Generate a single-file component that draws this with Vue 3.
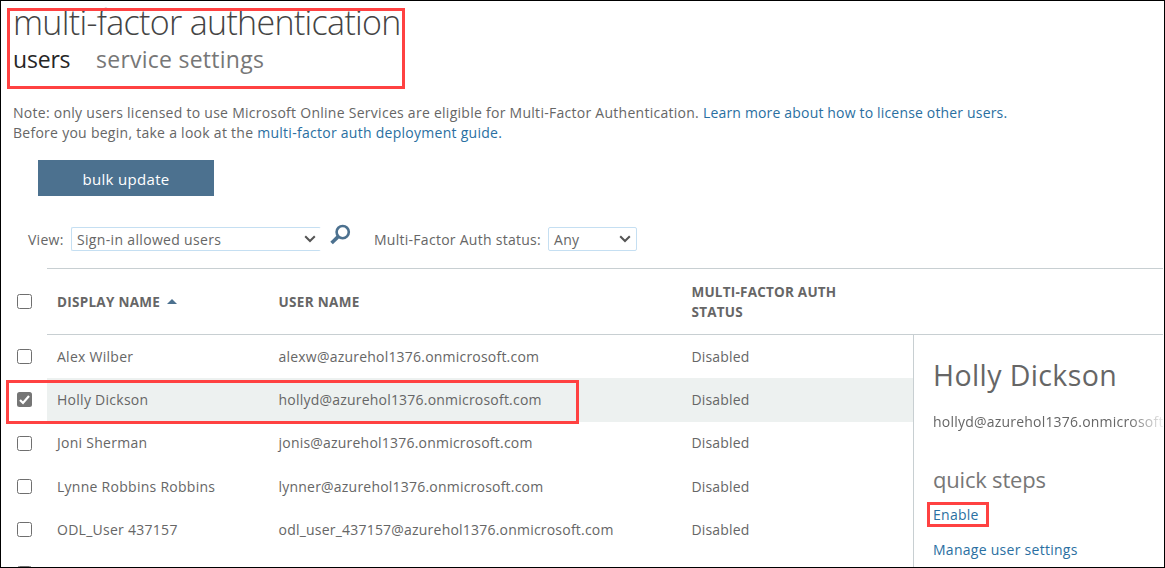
<script setup>
const users = [
  { name: 'Alex Wilber', email: 'alexw@azurehol1376.onmicrosoft.com' },
  { name: 'Holly Dickson', email: 'hollyd@azurehol1376.onmicrosoft.com', selected: true },
  { name: 'Joni Sherman', email: 'jonis@azurehol1376.onmicrosoft.com' },
  { name: 'Lynne Robbins Robbins', email: 'lynner@azurehol1376.onmicrosoft.com' },
  { name: 'ODL_User 437157', email: 'odl_user_437157@azurehol1376.onmicrosoft.com' },
]
</script>

<template>
  <div class="page">
    <header class="heading">
      <h1>multi-factor authentication</h1>
      <nav><a class="current">users</a><a class="service">service settings</a></nav>
    </header>

    <div class="note">
      <p class="line1">Note: only users licensed to use Microsoft Online Services are eligible for Multi-Factor Authentication. <a>Learn more about how to license other users.</a></p>
      <p class="line2">Before you begin, take a look at the <a>multi-factor auth deployment guide.</a></p>
    </div>

    <button class="bulk"><span>bulk update</span></button>

    <div class="filters">
      <span class="view-label">View:</span>
      <div class="select view">
        <span>Sign-in allowed users</span>
        <svg width="12" height="8" viewBox="0 0 12 8"><path d="M1.2 1.2L6 6l4.8-4.8" /></svg>
      </div>
      <svg class="search" width="22" height="22" viewBox="0 0 22 22">
        <circle cx="13.7" cy="8.1" r="6.1" />
        <path d="M9.4 12.4L2.6 19" />
      </svg>
      <span class="status-label">Multi-Factor Auth status:</span>
      <div class="select any">
        <span>Any</span>
        <svg width="12" height="8" viewBox="0 0 12 8"><path d="M1.2 1.2L6 6l4.8-4.8" /></svg>
      </div>
    </div>

    <div class="row head">
      <div class="check"><i class="box"></i></div>
      <div class="cells">
        <b class="name">DISPLAY NAME<svg width="10" height="5" viewBox="0 0 10 5"><path d="M0 5L5 0l5 5z" /></svg></b>
        <b class="email">USER NAME</b>
        <b class="status">MULTI-FACTOR AUTH<br />STATUS</b>
      </div>
    </div>

    <main class="content">
      <div class="list">
        <div v-for="u in users" :key="u.name" class="row" :class="{ selected: u.selected }">
          <div class="check">
            <i class="box" :class="{ checked: u.selected }">
              <svg v-if="u.selected" width="15" height="15" viewBox="0 0 15 15"><path d="M3 8l3 3 6-7" /></svg>
            </i>
          </div>
          <div class="cells">
            <span class="name">{{ u.name }}</span>
            <span class="email">{{ u.email }}</span>
            <span class="status">Disabled</span>
          </div>
        </div>
        <div class="row"><div class="check"><i class="box"></i></div><div class="cells"></div></div>
      </div>
      <aside class="details">
        <h2>Holly Dickson</h2>
        <p class="mail">hollyd@azurehol1376.onmicrosoft.com</p>
        <h3>quick steps</h3>
        <a class="enable">Enable</a>
        <a class="manage">Manage user settings</a>
      </aside>
    </main>

    <div class="mark mark-title"></div>
    <div class="mark mark-row"></div>
    <div class="mark mark-enable"></div>
    <div class="frame"></div>
  </div>
</template>

<style>
body { margin: 0; background: #fff; }
</style>

<style scoped>
.page {
  position: relative;
  box-sizing: border-box;
  width: 1165px;
  height: 568px;
  padding-right: 2px;
  overflow: hidden;
  background: #fff;
  color: #666;
  font: 14px/20px "Open Sans", "Noto Sans", sans-serif;
  letter-spacing: 0.27px;
  white-space: nowrap;
}
h1, h2, h3, p { margin: 0; font-weight: 400; }
.heading { height: 103px; padding-left: 13px; box-sizing: border-box; }
h1 { height: 45px; font-size: 34px; line-height: 44px; font-weight: 300; letter-spacing: -0.68px; color: #444; }
nav { display: flex; height: 28px; line-height: 28px; font-size: 23px; }
.current { width: 83px; letter-spacing: -0.2px; }
.service { letter-spacing: 0.25px; }
.note { height: 57px; padding-left: 13px; }
a { color: #2a6fa1; }
.line1 a { letter-spacing: 0.17px; }
nav a.service { color: #777; }
nav a.current { color: #262626; }
.bulk {
  display: block;
  width: 176px;
  height: 36px;
  margin-left: 38px;
  padding: 2px 0 0;
  border: 0;
  background: #4c718f;
  color: #fff;
  font: 15px/20px "Open Sans", "Noto Sans", sans-serif;
  letter-spacing: 0.32px;
}
.filters { display: flex; align-items: center; height: 24px; margin-top: 31px; padding-left: 28px; }
.filters span { padding-top: 2px; }
.view-label { width: 43px; }
.select {
  display: flex;
  align-items: center;
  justify-content: space-between;
  box-sizing: border-box;
  height: 24px;
  padding: 0 5px;
  border: 1px solid #c5dff2;
  border-radius: 2px;
  letter-spacing: 0.33px;
}
.select svg { fill: none; stroke: #555; stroke-width: 2; }
.view { width: 250px; border-right-color: transparent; padding-right: 4px; }
.any { width: 89px; }
.search { margin: -8px 0 0 8px; fill: none; stroke: #4c718f; stroke-width: 2.6; }
.search path { stroke-width: 3.6; }
.status-label { width: 174px; margin-left: 23px; }
.row { display: flex; height: 43.3px; }
.check { display: flex; align-items: center; flex: none; width: 30px; padding-left: 17px; }
.box {
  box-sizing: border-box;
  width: 15px;
  height: 15px;
  border: 1px solid #6f6f6f;
  border-radius: 2.5px;
}
.box.checked { border: 0; background: #757575; }
.box svg { display: block; fill: none; stroke: #fff; stroke-width: 2.2; }
.cells { display: flex; align-items: center; flex: 1; padding-left: 10px; }
.name { width: 221.5px; }
.email { width: 413px; letter-spacing: 0.21px; }
.status { letter-spacing: 0.15px; }
.head { height: 67px; margin-top: 17px; box-sizing: border-box; }
.head .cells { border-top: 1px solid #c8cfd2; border-bottom: 1px solid #c8cfd2; }
.head b { font-size: 13.5px; }
.head .email { letter-spacing: 0.33px; }
.head .status { letter-spacing: 0.22px; }
.head svg { margin: 0 0 3px 7px; fill: #4c718f; }
.content { display: flex; height: 233px; }
.list { width: 913px; }
.selected .cells { background: #edf1f0; }
.details { flex: 1; overflow: hidden; padding-left: 19px; border-left: 1px solid #c8cfd2; }
h2 { margin-top: 19px; height: 58px; line-height: 42px; font-size: 28.5px; letter-spacing: 0.4px; }
.mail {
  height: 52px;
  letter-spacing: 0.21px;
  -webkit-mask-image: linear-gradient(90deg, #000 195px, transparent 234px);
  mask-image: linear-gradient(90deg, #000 195px, transparent 234px);
}
h3 { height: 41px; line-height: 30px; font-size: 22px; letter-spacing: -0.2px; color: #777; }
.details a { display: block; height: 35px; }
.mark { position: absolute; box-sizing: border-box; border: 3px solid #ff4141; }
.mark-title { left: 7px; top: 8px; width: 398px; height: 81px; }
.mark-row { left: 6px; top: 380px; width: 573px; height: 44px; }
.mark-enable { left: 927px; top: 502px; width: 62px; height: 25px; }
.frame { position: absolute; inset: 0; border: 1px solid #000; }
</style>
